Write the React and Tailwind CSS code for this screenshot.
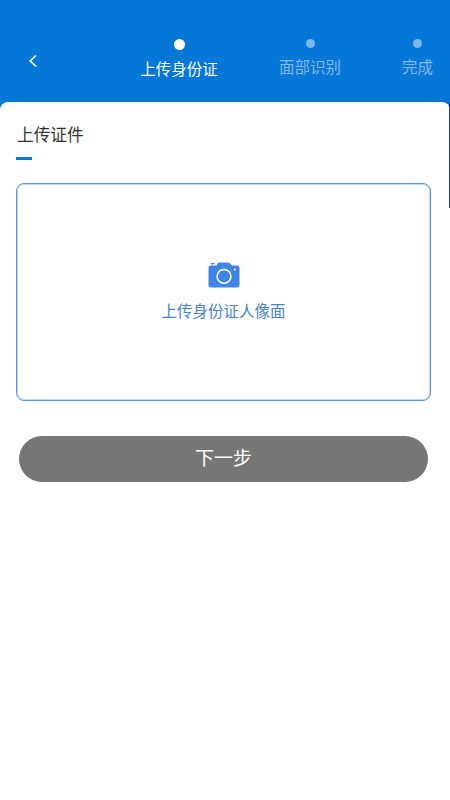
import React from "react";

function Step({ label, active, className }) {
  return (
    <div className={`flex flex-col items-center ${className}`}>
      <div className={active ? "w-[11px] h-[11px] rounded-full bg-white mt-[39px]" : "w-[9px] h-[9px] rounded-full bg-[#7db5ea] mt-[39px]"} />
      <div className={active ? "text-white text-[15.5px] leading-[20px] mt-[9.5px] whitespace-nowrap" : "text-[#85baec] text-[15.5px] leading-[20px] mt-[10px] whitespace-nowrap"}>{label}</div>
    </div>
  );
}

export default function App() {
  return (
    <div className="relative w-[450px] h-[800px] bg-white overflow-hidden font-['Roboto','Noto_Sans_CJK_SC',sans-serif]">
      <div className="h-[110px] bg-[#0277d6] flex items-start">
        <svg className="ml-[27px] mt-[54px] shrink-0" width="12" height="14" viewBox="0 0 12 14" fill="none">
          <path d="M9 1.5 L3.2 7 L9 12.5" stroke="#fff" strokeWidth="1.6" />
        </svg>
        <Step label="上传身份证" active className="ml-[102px] w-[76px]" />
        <Step label="面部识别" className="ml-[62px] w-[62px]" />
        <Step label="完成" className="ml-[61px] w-[31px]" />
      </div>
      <div className="-mt-2 bg-white rounded-t-lg h-[698px] px-4 relative">
        <div className="text-[#333] text-[16.7px] leading-[24px] pt-[22px] pl-[1px]">上传证件</div>
        <div className="w-4 h-[3px] bg-[#0277d6] mt-[9px]" />
        <div className="mt-[23px] w-[415px] h-[218px] border border-[#5a95e0] shadow-[inset_0_0_0_1px_#c0d6f2] rounded-lg flex flex-col items-center pt-[78px]">
          <svg width="32" height="26" viewBox="0 0 32 26">
            <path fill="#3f84e6" d="M3 3.5 H8.5 L10 1 Q10.5 .5 11.5 .5 H20 Q21 .5 21.8 1.2 L24 3.5 H28.5 Q31.5 3.5 31.5 6.5 V22.5 Q31.5 25.5 28.5 25.5 H3.5 Q.5 25.5 .5 22.5 V6.5 Q.5 3.5 3 3.5 Z" />
            <circle cx="16" cy="14.4" r="6.9" fill="none" stroke="#fff" strokeWidth="1.6" />
            <circle cx="26.8" cy="7.6" r="1" fill="#fff" />
            <rect x="3" y="1" width="3.5" height="1.4" fill="#3f84e6" />
          </svg>
          <div className="text-[#4a84c8] text-[15.5px] leading-[22px] mt-[13px] whitespace-nowrap">上传身份证人像面</div>
        </div>
        <button className="mt-[35px] ml-[3px] w-[409px] h-[46px] rounded-full bg-[#767676] text-white text-[19px] flex items-center justify-center">下一步</button>
      </div>
      <div className="absolute right-0 top-[102px] w-px h-[106px] bg-[#1b3f9c]" />
    </div>
  );
}
